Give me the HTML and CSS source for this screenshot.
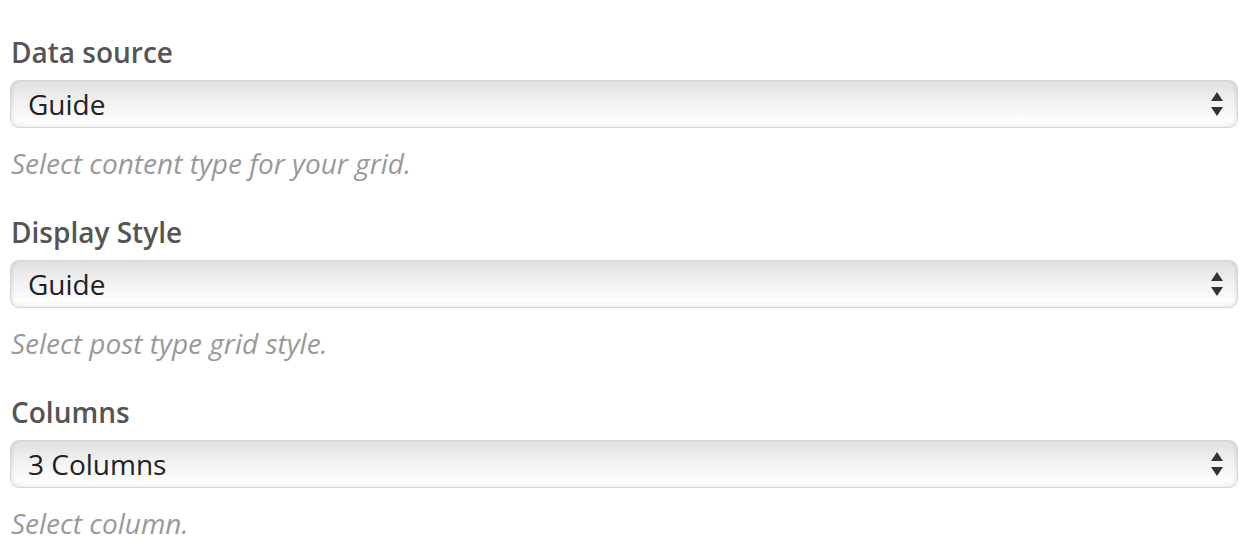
FILE: index.html
```html
<!DOCTYPE html>
<html lang="en">
<head>
    <meta charset="UTF-8">
    <meta name="viewport" content="width=device-width, initial-scale=1.0">
    <title>Grid Settings</title>
    <link rel="stylesheet" href="styles.css">
</head>
<body>
    <div class="settings">
        <!-- tail of the previous field, scrolled mostly out of view -->
        <p class="help help-prev">Enter the heading to display for your grid.</p>

        <div class="field">
            <label for="source">Data source</label>
            <div class="select-wrap">
                <select id="source">
                    <option>Guide</option>
                    <option>Posts</option>
                    <option>Pages</option>
                </select>
                <svg class="arrows" width="14" height="26" viewBox="0 0 14 26">
                    <path d="M7 1 L13 10 L1 10 Z" fill="#333"/>
                    <path d="M7 25 L13 16 L1 16 Z" fill="#333"/>
                </svg>
            </div>
            <p class="help">Select content type for your grid.</p>
        </div>

        <div class="field">
            <label for="style">Display Style</label>
            <div class="select-wrap">
                <select id="style">
                    <option>Guide</option>
                    <option>Masonry</option>
                </select>
                <svg class="arrows" width="14" height="26" viewBox="0 0 14 26">
                    <path d="M7 1 L13 10 L1 10 Z" fill="#333"/>
                    <path d="M7 25 L13 16 L1 16 Z" fill="#333"/>
                </svg>
            </div>
            <p class="help">Select post type grid style.</p>
        </div>

        <div class="field">
            <label for="columns">Columns</label>
            <div class="select-wrap">
                <select id="columns">
                    <option>3 Columns</option>
                    <option>2 Columns</option>
                    <option>4 Columns</option>
                </select>
                <svg class="arrows" width="14" height="26" viewBox="0 0 14 26">
                    <path d="M7 1 L13 10 L1 10 Z" fill="#333"/>
                    <path d="M7 25 L13 16 L1 16 Z" fill="#333"/>
                </svg>
            </div>
            <p class="help">Select column.</p>
        </div>
    </div>
</body>
</html>
```

FILE: styles.css
```css
body {
    margin: 0;
    padding: 0 18px 0 10px;
    font-family: "Open Sans", "DejaVu Sans", sans-serif;
    background: #fff;
    color: #333;
}
.settings {
    margin-top: -39px;
}
.help {
    margin: 0;
    font-size: 28px;
    line-height: 36px;
    font-style: italic;
    color: #999;
    padding-left: 1px;
}
.help-prev {
    margin-bottom: 37px;
}
.field {
    margin-top: 33px;
}
.field label {
    display: block;
    font-size: 28px;
    line-height: 36px;
    font-weight: 600;
    color: #555;
    padding-left: 1px;
    margin-bottom: 10px;
}
.field .help {
    margin-top: 17px;
}
.select-wrap {
    position: relative;
}
.select-wrap select {
    -webkit-appearance: none;
    appearance: none;
    display: block;
    width: 100%;
    height: 48px;
    margin: 0;
    padding: 0 40px 0 17px;
    font-family: inherit;
    font-size: 28px;
    color: #222;
    border: 1px solid #d6d6d6;
    border-radius: 9px;
    background: linear-gradient(#e0e0e0, #f1f1f1 45%, #fdfdfd 85%, #f4f4f4);
    box-shadow: inset 3px 0 3px -1px rgba(0, 0, 0, 0.07), inset -3px 0 3px -1px rgba(0, 0, 0, 0.07);
    outline: none;
}
.arrows {
    position: absolute;
    top: 11px;
    right: 14px;
    pointer-events: none;
}
```
